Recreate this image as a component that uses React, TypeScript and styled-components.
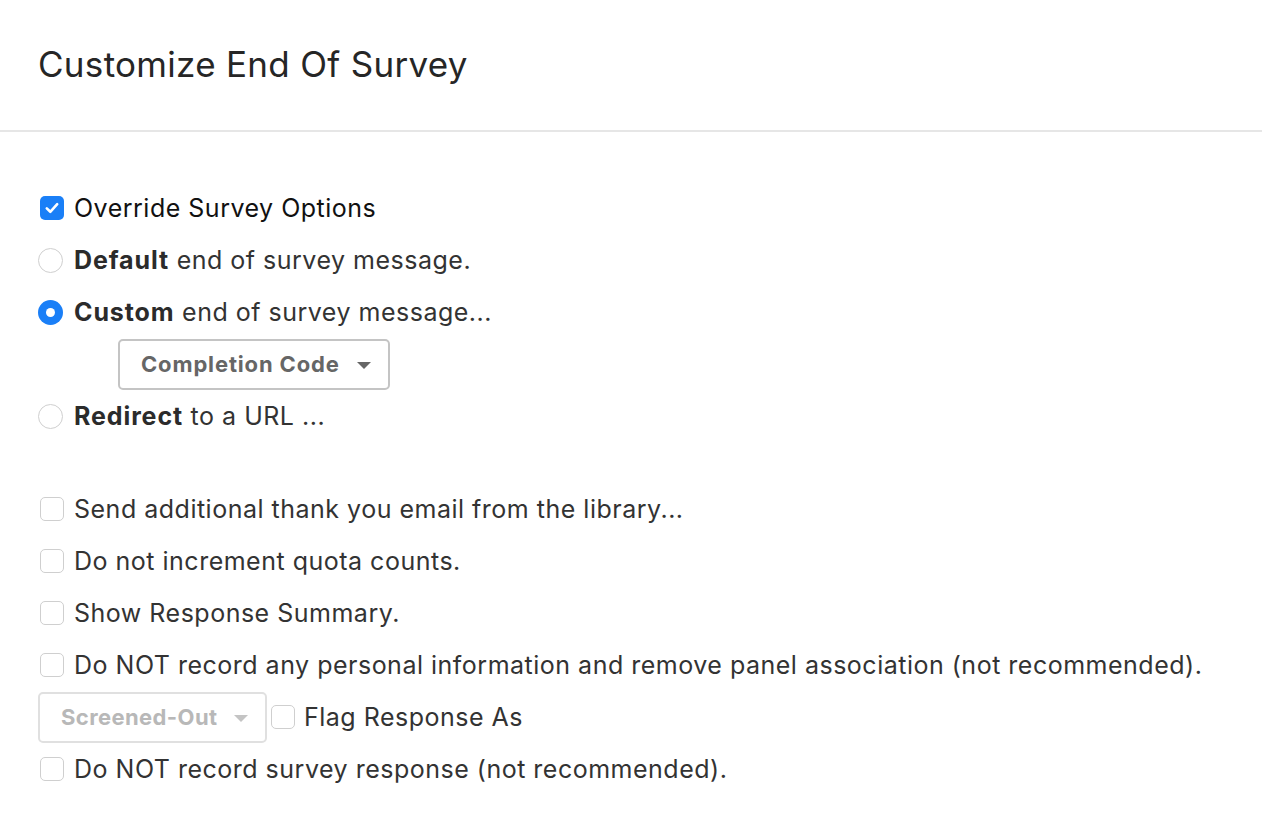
import React from "react";
import styled, { createGlobalStyle } from "styled-components";

const Global = createGlobalStyle`
  html, body { margin: 0; padding: 0; background: #fff; }
  body { font-family: Inter, "Liberation Sans", sans-serif; color: #333; }
`;

const Page = styled.div`
  width: 1262px;
  min-height: 814px;
  background: #fff;
`;

const Header = styled.header`
  height: 132px;
  box-sizing: border-box;
  padding: 0 38px;
  display: flex;
  align-items: center;
  border-bottom: 2px solid #e6e6e6;
`;

const Title = styled.h1`
  margin: 0;
  margin-top: -2px;
  font-size: 35px;
  font-weight: 400;
  color: #262626;
  letter-spacing: 0.3px;
`;

const Body = styled.div`
  padding: 50px 38px 0;
  display: flex;
  flex-direction: column;
`;

const Group = styled.div<{ $gap?: number }>`
  display: flex;
  flex-direction: column;
  margin-top: ${(p) => p.$gap ?? 0}px;
`;

const Row = styled.label<{ $indent?: number }>`
  height: 52px;
  display: flex;
  align-items: center;
  padding-left: ${(p) => p.$indent ?? 0}px;
  font-size: 25px;
  letter-spacing: 0.5px;
  color: #333;
  gap: 10px;
`;

const Box = styled.span<{ $checked?: boolean }>`
  width: 24px;
  height: 24px;
  box-sizing: border-box;
  border-radius: 5px;
  margin-left: 2px;
  flex: none;
  display: flex;
  align-items: center;
  justify-content: center;
  background: ${(p) => (p.$checked ? "#1a7ff7" : "#fff")};
  border: ${(p) => (p.$checked ? "none" : "1.5px solid #cfcfcf")};
`;

const Radio = styled.span<{ $checked?: boolean }>`
  width: 25px;
  height: 25px;
  box-sizing: border-box;
  border-radius: 50%;
  flex: none;
  display: flex;
  align-items: center;
  justify-content: center;
  background: ${(p) => (p.$checked ? "#1a7ff7" : "#fff")};
  border: ${(p) => (p.$checked ? "none" : "1.5px solid #cfcfcf")};
  margin-right: 1px;
`;

const Dot = styled.span`
  width: 9px;
  height: 9px;
  border-radius: 50%;
  background: #fff;
`;

const Label = styled.span<{ $dark?: boolean }>`
  color: ${(p) => (p.$dark ? "#111" : "#333")};
  white-space: nowrap;
  b { font-weight: 700; color: #2b2b2b; letter-spacing: 0.9px; }
`;

const DropRow = styled.div<{ $indent?: number }>`
  height: 52px;
  display: flex;
  align-items: center;
  padding-left: ${(p) => p.$indent ?? 0}px;
  font-size: 25px;
  letter-spacing: 0.5px;
`;

const Select = styled.div<{ $muted?: boolean; $w: number }>`
  width: ${(p) => p.$w}px;
  height: 51px;
  box-sizing: border-box;
  border: 2px solid ${(p) => (p.$muted ? "#e0e0e0" : "#c4c4c4")};
  border-radius: 5px;
  display: flex;
  align-items: center;
  justify-content: space-between;
  padding: 0 17px 0 21px;
  font-size: 22px;
  letter-spacing: ${(p) => (p.$muted ? "0.4px" : "0.85px")};
  font-weight: 700;
  color: ${(p) => (p.$muted ? "#b8b8b8" : "#666")};
  flex: none;
`;

const Caret = styled.span<{ $muted?: boolean }>`
  width: 0;
  height: 0;
  border-left: 7px solid transparent;
  border-right: 7px solid transparent;
  border-top: 7px solid ${(p) => (p.$muted ? "#c4c4c4" : "#666")};
  margin-top: 2px;
`;

const FlagLabel = styled.label`
  display: flex;
  align-items: center;
  gap: 9px;
  margin-left: 2px;
  color: #333;
`;

const Check = () => (
  <svg width="16" height="16" viewBox="0 0 16 16" fill="none">
    <path d="M2.8 8.4 L6.3 11.8 L13.2 4.2" stroke="#fff" strokeWidth="2.6" strokeLinecap="round" strokeLinejoin="round" />
  </svg>
);

export default function App() {
  return (
    <Page>
      <Global />
      <Header>
        <Title>Customize End Of Survey</Title>
      </Header>
      <Body>
        <Group>
          <Row>
            <Box $checked>
              <Check />
            </Box>
            <Label $dark>Override Survey Options</Label>
          </Row>
          <Row>
            <Radio />
            <Label>
              <b>Default</b> end of survey message.
            </Label>
          </Row>
          <Row>
            <Radio $checked>
              <Dot />
            </Radio>
            <Label>
              <b>Custom</b> end of survey message...
            </Label>
          </Row>
          <DropRow $indent={80}>
            <Select $w={272}>
              <span>Completion Code</span>
              <Caret />
            </Select>
          </DropRow>
          <Row>
            <Radio />
            <Label>
              <b>Redirect</b> to a URL ...
            </Label>
          </Row>
        </Group>
        <Group $gap={41}>
          <Row>
            <Box />
            <Label>Send additional thank you email from the library...</Label>
          </Row>
          <Row>
            <Box />
            <Label>Do not increment quota counts.</Label>
          </Row>
          <Row>
            <Box />
            <Label>Show Response Summary.</Label>
          </Row>
          <Row>
            <Box />
            <Label>Do NOT record any personal information and remove panel association (not recommended).</Label>
          </Row>
          <DropRow>
            <Select $muted $w={229}>
              <span>Screened-Out</span>
              <Caret $muted />
            </Select>
            <FlagLabel>
              <Box />
              <Label>Flag Response As</Label>
            </FlagLabel>
          </DropRow>
          <Row>
            <Box />
            <Label>Do NOT record survey response (not recommended).</Label>
          </Row>
        </Group>
      </Body>
    </Page>
  );
}
